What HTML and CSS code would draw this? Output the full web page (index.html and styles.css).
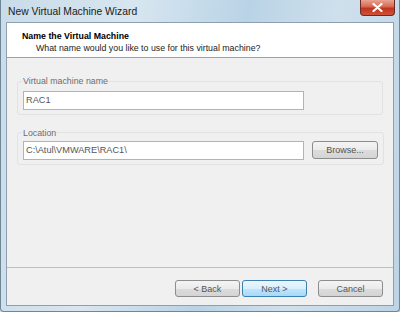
FILE: index.html
```html
<!DOCTYPE html>
<html lang="en">
<head>
  <meta charset="UTF-8" />
  <title>New Virtual Machine Wizard</title>
  <link rel="stylesheet" href="styles.css">
</head>
<body>

  <div class="window">
    <!-- Title bar -->
    <div class="titlebar">
      <span class="title">New Virtual Machine Wizard</span>
      <button class="close-btn">
        <svg width="11" height="9" viewBox="0 0 11 9">
          <path d="M1.5 1 L9.5 8 M9.5 1 L1.5 8" stroke="#fff" stroke-width="2.2" stroke-linecap="round"/>
        </svg>
      </button>
    </div>

    <div class="client">
      <!-- Header -->
      <div class="header">
        <h3>Name the Virtual Machine</h3>
        <p>What name would you like to use for this virtual machine?</p>
      </div>

      <div class="content">
        <fieldset class="group">
          <legend>Virtual machine name</legend>
          <input type="text" class="field" value="RAC1" />
        </fieldset>

        <fieldset class="group">
          <legend>Location</legend>
          <div class="row">
            <input type="text" class="field" value="C:\Atul\VMWARE\RAC1\" />
            <button class="btn browse-btn">Browse...</button>
          </div>
        </fieldset>
      </div>

      <!-- Footer buttons -->
      <div class="footer">
        <button class="btn">&lt; Back</button>
        <button class="btn default">Next &gt;</button>
        <button class="btn cancel-btn">Cancel</button>
      </div>
    </div>
  </div>

</body>
</html>
```

FILE: styles.css
```css
body {
  margin: 0;
  width: 400px;
  height: 312px;
  overflow: hidden;
  font-family: "Liberation Sans", Arial, sans-serif;
  background: linear-gradient(100deg, #c9dce9 0%, #d7e6f0 30%, #b9d3e6 55%, #cfe0ec 75%, #bcd4e6 100%);
}
.window {
  box-sizing: border-box;
  width: 400px;
  height: 312px;
  padding: 0 5px 5px 5px;
  border: 1px solid #6f8598;
  border-top: none;
  border-radius: 0 0 4px 4px;
  display: flex;
  flex-direction: column;
}
.titlebar {
  height: 22px;
  display: flex;
  align-items: flex-start;
}
.title {
  margin: 6px 0 0 2px;
  font-size: 10.3px;
  color: #1a1a1a;
}
.close-btn {
  margin-left: auto;
  margin-right: -1px;
  width: 35px;
  height: 16px;
  padding: 0;
  border: 1px solid #6b2a23;
  border-top: none;
  border-radius: 0 0 4px 4px;
  background: linear-gradient(#e8a493 0%, #d8674f 45%, #c0341d 55%, #d0523a 100%);
  display: flex;
  align-items: center;
  justify-content: center;
}
.client {
  flex: 1;
  display: flex;
  flex-direction: column;
  background: #f0f0f0;
  border: 1px solid #8f9faf;
}
.header {
  height: 35px;
  background: #fff;
  border-bottom: 1px solid #a0a0a0;
  padding: 8px 0 0 15px;
  box-sizing: border-box;
}
.header h3 {
  margin: 0;
  font-size: 8.8px;
  font-weight: bold;
  color: #000;
}
.header p {
  margin: 2px 0 0 14px;
  font-size: 8.8px;
  color: #222;
}
.content {
  flex: 1;
  padding: 18px 10px 0 10px;
}
.group {
  margin: 0 0 13px 0;
  padding: 3px 5px 4px 5px;
  border: 1px solid #e2e2e2;
  border-radius: 3px;
}
.group legend {
  padding: 0;
  margin-left: 0;
  font-size: 8.8px;
  color: #6d6d6d;
}
.field {
  box-sizing: border-box;
  width: 281px;
  height: 19px;
  padding: 0 2px;
  border: 1px solid #abb5c2;
  background: #fff;
  font-family: "Liberation Sans", Arial, sans-serif;
  font-size: 9.2px;
  color: #555;
}
.row {
  display: flex;
  align-items: center;
  gap: 8px;
}
.btn {
  box-sizing: border-box;
  height: 17px;
  padding: 0;
  border: 1px solid #8d8d8d;
  border-radius: 3px;
  background: linear-gradient(#f4f4f4 0%, #ebebeb 50%, #dcdcdc 51%, #d4d4d4 100%);
  font-family: "Liberation Sans", Arial, sans-serif;
  font-size: 9px;
  color: #555;
}
.browse-btn {
  width: 66px;
  height: 18px;
}
.footer {
  height: 38px;
  border-top: 1px solid #c0c0c0;
  display: flex;
  align-items: flex-start;
  padding: 12px 10px 0 0;
  box-sizing: border-box;
  justify-content: flex-end;
}
.footer .btn {
  width: 65px;
  margin-left: 2px;
}
.footer .default {
  border-color: #3c7fb1;
  background: linear-gradient(#eaf6fd 0%, #d9f0fc 50%, #bee6fd 51%, #a7d9f5 100%);
}
.footer .cancel-btn {
  margin-left: 11px;
}
```
